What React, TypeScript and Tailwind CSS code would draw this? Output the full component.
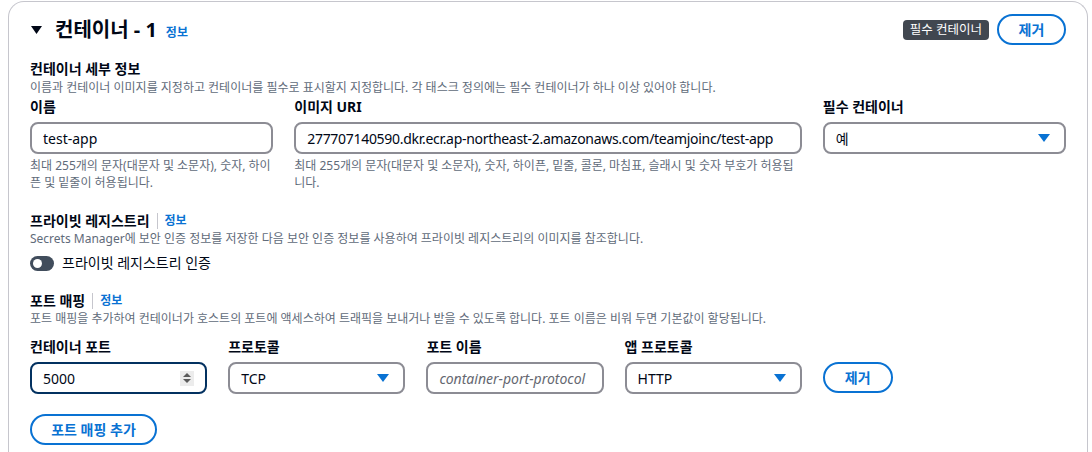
import React from "react";

const FONT = "font-['Noto_Sans','Noto_Sans_CJK_KR',sans-serif]";

function Caret() {
  return (
    <svg width="12" height="8" viewBox="0 0 12 8" className="shrink-0">
      <path d="M0 0 L12 0 L6 8 Z" fill="#0972d3" />
    </svg>
  );
}

function Info() {
  return <span className="text-[12px] font-bold text-[#0972d3]">정보</span>;
}

function Divider() {
  return <span className="mx-[7px] inline-block h-[16px] w-px bg-[#c6c6cd]" />;
}

function TextInput({ value, placeholder, focused, stepper, tight }: { value?: string; placeholder?: string; focused?: boolean; stepper?: boolean; tight?: boolean }) {
  return (
    <div
      className={`flex h-[32px] items-center rounded-lg border-2 px-[11px] ${
        focused ? "border-[#033160]" : "border-[#8c8c94]"
      }`}
    >
      {value ? (
        <span className={`flex-1 overflow-hidden whitespace-nowrap text-[14px] text-[#000716] ${tight ? "tracking-[-0.3px]" : ""}`}>{value}</span>
      ) : (
        <span className="flex-1 truncate text-[14px] italic text-[#656871]">{placeholder}</span>
      )}
      {stepper && (
        <div className="flex h-[15px] w-[14px] flex-col items-center justify-center gap-[2px] bg-[#ececec]">
          <svg width="8" height="4" viewBox="0 0 8 4"><path d="M0 4 L8 4 L4 0 Z" fill="#5b5b5b" /></svg>
          <svg width="8" height="4" viewBox="0 0 8 4"><path d="M0 0 L8 0 L4 4 Z" fill="#5b5b5b" /></svg>
        </div>
      )}
    </div>
  );
}

function SelectBox({ value }: { value: string }) {
  return (
    <div className="flex h-[32px] items-center justify-between rounded-lg border-2 border-[#8c8c94] pl-[11px] pr-[14px]">
      <span className="text-[14px] text-[#000716]">{value}</span>
      <Caret />
    </div>
  );
}

function Label({ children }: { children: React.ReactNode }) {
  return <div className="mb-[5px] text-[14px] font-bold leading-[20px] text-[#000716]">{children}</div>;
}

function Help({ children }: { children: React.ReactNode }) {
  return <div className="mt-[3px] text-[12px] leading-[17px] text-[#5f6b7a]">{children}</div>;
}

function OutlineButton({ children, className = "" }: { children: React.ReactNode; className?: string }) {
  return (
    <div
      className={`flex h-[31px] items-center justify-center rounded-full border-2 border-[#0972d3] text-[14px] font-bold text-[#0972d3] ${className}`}
    >
      {children}
    </div>
  );
}

export default function App() {
  return (
    <div className={`h-[452px] w-[1092px] overflow-hidden bg-white ${FONT}`}>
      <div className="ml-2 mt-px h-[520px] w-[1080px] rounded-t-2xl border border-b-0 border-[#c6c6cd] px-[21px] pt-[12px]">
        {/* header */}
        <div className="flex items-center justify-between">
          <div className="flex items-center">
            <svg width="11" height="8" viewBox="0 0 11 8" className="ml-[1px] mr-[13px]">
              <path d="M0 0 L11 0 L5.5 8 Z" fill="#000716" />
            </svg>
            <span className="text-[20px] font-bold leading-[24px] text-[#000716]">컨테이너 - 1</span>
            <span className="ml-[9px] mt-[2px]"><Info /></span>
          </div>
          <div className="flex items-center">
            <span className="rounded-[4px] bg-[#414750] px-[7px] text-[12.5px] leading-[20px] text-white">필수 컨테이너</span>
            <OutlineButton className="ml-[8px] w-[69px]">제거</OutlineButton>
          </div>
        </div>

        {/* container details */}
        <div className="mt-[14px] text-[14px] font-bold leading-[20px] text-[#000716]">컨테이너 세부 정보</div>
        <div className="mt-[1px] text-[12px] leading-[16px] text-[#5f6b7a]">
          이름과 컨테이너 이미지를 지정하고 컨테이너를 필수로 표시할지 지정합니다. 각 태스크 정의에는 필수 컨테이너가 하나 이상 있어야 합니다.
        </div>

        <div className="mt-[1px] grid grid-cols-4 gap-x-[21px]">
          <div>
            <Label>이름</Label>
            <TextInput value="test-app" />
            <Help>최대 255개의 문자(대문자 및 소문자), 숫자, 하이픈 및 밑줄이 허용됩니다.</Help>
          </div>
          <div className="col-span-2">
            <Label>이미지 URI</Label>
            <TextInput value="277707140590.dkr.ecr.ap-northeast-2.amazonaws.com/teamjoinc/test-app" tight />
            <Help>최대 255개의 문자(대문자 및 소문자), 숫자, 하이픈, 밑줄, 콜론, 마침표, 슬래시 및 숫자 부호가 허용됩니다.</Help>
          </div>
          <div>
            <Label>필수 컨테이너</Label>
            <SelectBox value="예" />
          </div>
        </div>

        {/* private registry */}
        <div className="mt-[20px] flex items-center text-[14px] font-bold leading-[20px] text-[#000716]">
          프라이빗 레지스트리
          <Divider />
          <Info />
        </div>
        <div className="text-[12px] leading-[16px] text-[#5f6b7a]">
          Secrets Manager에 보안 인증 정보를 저장한 다음 보안 인증 정보를 사용하여 프라이빗 레지스트리의 이미지를 참조합니다.
        </div>
        <div className="mt-[6px] flex items-center">
          <div className="flex h-[15px] w-[24px] items-center rounded-full bg-[#414d5c] pl-[3px]">
            <div className="h-[9px] w-[9px] rounded-full bg-white" />
          </div>
          <span className="ml-[8px] text-[14px] leading-[20px] text-[#000716]">프라이빗 레지스트리 인증</span>
        </div>

        {/* port mapping */}
        <div className="mt-[18px] flex items-center text-[14px] font-bold leading-[20px] text-[#000716]">
          포트 매핑
          <Divider />
          <Info />
        </div>
        <div className="text-[12px] leading-[16px] text-[#5f6b7a]">
          포트 매핑을 추가하여 컨테이너가 호스트의 포트에 액세스하여 트래픽을 보내거나 받을 수 있도록 합니다. 포트 이름은 비워 두면 기본값이 할당됩니다.
        </div>

        <div className="mt-[10px] grid grid-cols-4 gap-x-[21px]">
          <div className="col-span-3 grid grid-cols-4 gap-x-[21px]">
            <div>
              <Label>컨테이너 포트</Label>
              <TextInput value="5000" focused stepper />
            </div>
            <div>
              <Label>프로토콜</Label>
              <SelectBox value="TCP" />
            </div>
            <div>
              <Label>포트 이름</Label>
              <TextInput placeholder="container-port-protocol" />
            </div>
            <div>
              <Label>앱 프로토콜</Label>
              <SelectBox value="HTTP" />
            </div>
          </div>
          <div className="flex items-end">
            <OutlineButton className="mb-[1px] w-[70px]">제거</OutlineButton>
          </div>
        </div>

        <OutlineButton className="mt-[20px] w-[127px]">포트 매핑 추가</OutlineButton>
      </div>
    </div>
  );
}
